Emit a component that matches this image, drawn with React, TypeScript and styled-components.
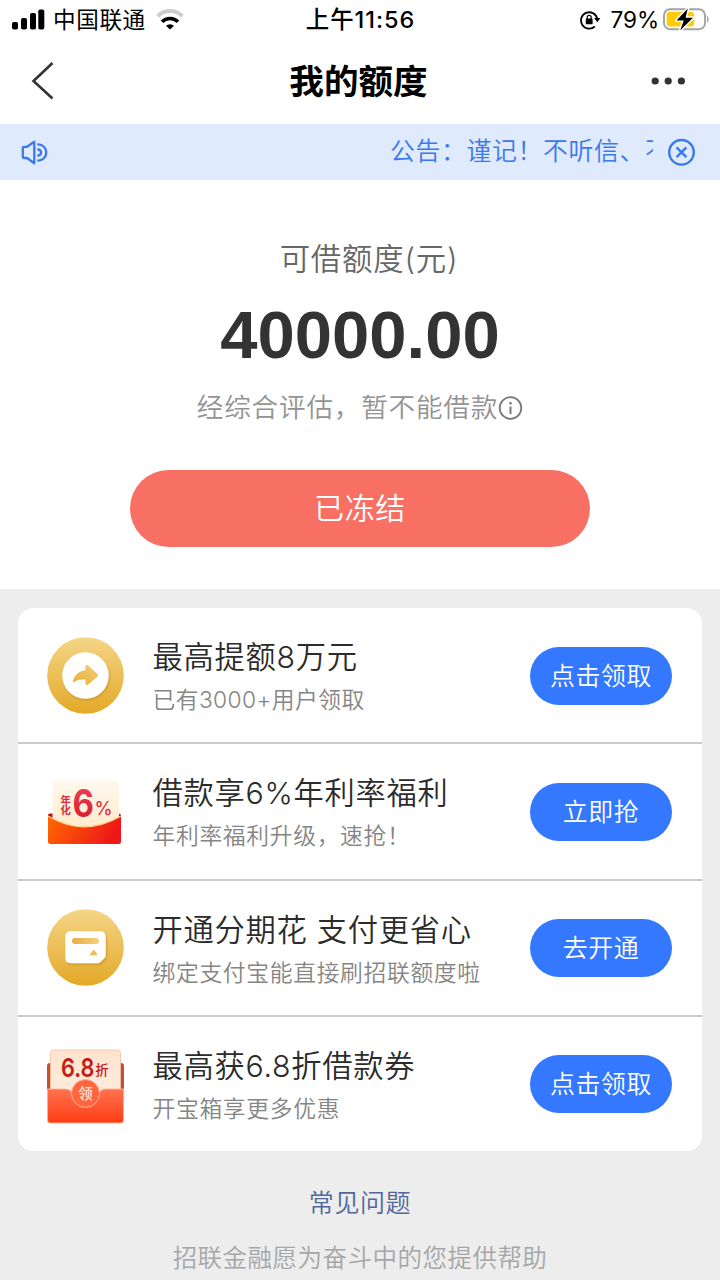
import React from "react";
import styled, { createGlobalStyle } from "styled-components";

const GlobalStyle = createGlobalStyle`
  * { box-sizing: border-box; }
  body {
    margin: 0;
    background: #ededed;
    font-family: Inter, "Noto Sans CJK SC", sans-serif;
    font-weight: 350;
    color: #333;
  }
`;

const Screen = styled.div`
  width: 720px;
  height: 1280px;
  overflow: hidden;
  background: #ededed;
  display: flex;
  flex-direction: column;
`;

const StatusBar = styled.div`
  height: 40px;
  flex: none;
  padding: 0 11px 0 12px;
  background: #fff;
  color: #000;
  display: grid;
  grid-template-columns: 1fr auto 1fr;
  align-items: center;
  font-size: 22.6px;
  font-weight: 400;
  line-height: 40px;
`;

const StatusSide = styled.div<{ $end?: boolean }>`
  display: flex;
  align-items: center;
  justify-content: ${(p) => (p.$end ? "flex-end" : "flex-start")};
`;

const Carrier = styled.span`
  margin: 0 10px 0 8px;
  letter-spacing: 0.6px;
`;

const Clock = styled.span`
  font-weight: 500;
  font-size: 23.4px;
  letter-spacing: 1px;
`;

const Percent = styled.span`
  margin: 0 4px 0 10px;
  letter-spacing: -0.1px;
`;

const NavBar = styled.header`
  height: 84px;
  flex: none;
  background: #fff;
  padding: 0 34px 3px 31px;
  display: grid;
  grid-template-columns: 1fr auto 1fr;
  align-items: center;
`;

const NavTitle = styled.h1`
  margin: 0;
  color: #000;
  font-size: 34.6px;
  line-height: 80px;
  font-weight: 700;
`;

const MoreSlot = styled.div`
  display: flex;
  justify-content: flex-end;
`;

const Notice = styled.div`
  height: 56px;
  flex: none;
  padding: 0 24px 0 21px;
  background: #dfeafd;
  color: #3b78ee;
  display: flex;
  align-items: center;
`;

const NoticeWindow = styled.div`
  flex: 1;
  margin: 0 15px 0 342px;
  overflow: hidden;
  white-space: nowrap;
  font-size: 24.9px;
  letter-spacing: 0.6px;
  line-height: 54px;
  height: 56px;
`;

const Hero = styled.section`
  height: 409px;
  flex: none;
  background: #fff;
  display: flex;
  flex-direction: column;
  align-items: center;
`;

const QuotaLabel = styled.div`
  margin-top: 57px;
  padding-left: 18px;
  font-size: 30.4px;
  letter-spacing: 0.8px;
  line-height: 44px;
  color: #666;
`;

const QuotaAmount = styled.div`
  margin-top: 16px;
  font: 700 67px/76px "Liberation Sans", sans-serif;
  color: #333;
`;

const QuotaHint = styled.div`
  margin-top: 14px;
  display: flex;
  align-items: center;
  font-size: 26.6px;
  letter-spacing: 0.8px;
  line-height: 40px;
  color: #939393;
`;

const FrozenButton = styled.button`
  margin-top: 43px;
  width: 460px;
  height: 77px;
  border: 0;
  border-radius: 39px;
  background: #f86f64;
  color: #fff;
  font-family: inherit;
  font-weight: inherit;
  font-size: 30px;
  letter-spacing: 0.6px;
  line-height: 77px;
  padding: 0;
`;

const Card = styled.ul`
  list-style: none;
  margin: 19px 18px 0;
  padding: 0;
  border-radius: 15px;
  background: #fff;
  flex: none;
`;

const Row = styled.li`
  height: 136.3px;
  padding: 0 30px 0 29px;
  display: flex;
  align-items: center;
  border-bottom: 2px solid #cbcbcb;
  &:last-child {
    height: 134.1px;
    border-bottom: 0;
  }
`;

const RowIcon = styled.div<{ $drop: number }>`
  display: flex;
  padding-top: ${(p) => p.$drop}px;
`;

const RowText = styled.div`
  flex: 1;
  margin-left: 28.5px;
  padding-top: 2px;
  white-space: nowrap;
`;

const RowTitle = styled.div`
  font-size: 30.3px;
  letter-spacing: 0.7px;
  line-height: 44px;
  color: #2b2b2b;
`;

const RowSub = styled.div<{ $tracking?: number }>`
  margin-top: 4px;
  font-size: 22.8px;
  letter-spacing: ${(p) => p.$tracking ?? 0.65}px;
  line-height: 34px;
  color: #858585;
`;

const RowButton = styled.button`
  margin-top: 1px;
  width: 142px;
  height: 58px;
  border: 0;
  padding: 1px 0 0;
  border-radius: 29px;
  background: #3478ff;
  color: #fff;
  font-family: inherit;
  font-weight: inherit;
  font-size: 24.9px;
  letter-spacing: 0.6px;
  line-height: 57px;
`;

const Footer = styled.footer`
  display: flex;
  flex-direction: column;
  align-items: center;
`;

const FaqLink = styled.a`
  margin-top: 33px;
  font-size: 25px;
  letter-spacing: 0.6px;
  line-height: 38px;
  color: #51669a;
`;

const Slogan = styled.p`
  margin: 17px 0 0;
  font-size: 24.5px;
  letter-spacing: 0.48px;
  line-height: 38px;
  color: #a6a6a6;
`;

const SignalIcon = () => (
  <svg width="33" height="22" viewBox="0 0 33 22">
    <rect x="0" y="13" width="6" height="7.5" rx="1.8" />
    <rect x="9" y="9" width="6" height="11.5" rx="1.8" />
    <rect x="18" y="4" width="6" height="16.5" rx="1.8" />
    <rect x="26.3" y="0.5" width="6" height="20" rx="1.8" />
  </svg>
);

const WifiIcon = () => (
  <svg width="28" height="22" viewBox="0 0 28 22" fill="none">
    <path d="M1.6 7.2a17.6 17.6 0 0 1 24.8 0" stroke="#cdcdcd" strokeWidth="4" />
    <path d="M6 12.800a11.300 11.300 0 0 1 16 0" stroke="#000" strokeWidth="3.600" />
    <path d="M10 16.700a6 6 0 0 1 8 0L14 20.600z" fill="#000" />
  </svg>
);

const RotationLockIcon = () => (
  <svg width="21" height="20" viewBox="0 0 21 20" fill="none">
    <path d="M14.8 16.5A8.2 8.2 0 1 1 17.2 8.6" stroke="#000" strokeWidth="1.8" />
    <path d="M14.2 8h6.2l-3.1 4.2z" fill="#000" />
    <rect x="5.8" y="8.6" width="6.8" height="5.7" rx="0.9" fill="#000" />
    <path d="M7.2 9V7.4a2 2 0 0 1 4 0V9" stroke="#000" strokeWidth="1.2" />
  </svg>
);

const BatteryIcon = () => (
  <svg width="46" height="24" viewBox="0 0 46 24">
    <rect x="1" y="1.200" width="41" height="20" rx="6" fill="none" stroke="#a3a3a3" strokeWidth="1.9" />
    <path d="M44 7.700c2 .8 2 6.200 0 7z" fill="#a3a3a3" />
    <rect x="3.600" y="3.800" width="27.600" height="14.800" rx="3.500" fill="#fdcb0a" />
    <path
      d="M24.800 .6 13.500 12.600h7.200L17.200 22.500l12.800-12.800h-7.400z"
      fill="#000"
      stroke="#fff"
      strokeWidth="3"
      strokeLinejoin="round"
      paintOrder="stroke"
    />
  </svg>
);

const BackIcon = () => (
  <svg width="24" height="38" viewBox="0 0 24 38" fill="none">
    <path d="M21.500 1 2.500 19 21.500 36.500" stroke="#333" strokeWidth="2.600" />
  </svg>
);

const MoreIcon = () => (
  <svg width="35" height="8" viewBox="0 0 35 8" fill="#333">
    <circle cx="4.200" cy="4" r="3.600" />
    <circle cx="17.200" cy="4" r="3.600" />
    <circle cx="30.400" cy="4" r="3.600" />
  </svg>
);

const SpeakerIcon = () => (
  <svg width="27" height="25" viewBox="0 0 27 25" fill="none" stroke="#3b78ee" strokeWidth="2.300">
    <path d="M2.800 6.800H6L13.300 1.700V23.300L6 18H2.800A1 1 0 0 1 1.800 17V7.800A1 1 0 0 1 2.800 6.800Z" strokeLinejoin="round" />
    <path d="M16.300 9.500h.8a3 3 0 0 1 0 6h-.8" />
    <path d="M16.300 4.300h.8a8.200 8.200 0 0 1 0 16.400h-.8" />
  </svg>
);

const CloseIcon = () => (
  <svg width="28" height="28" viewBox="0 0 28 28" fill="none" stroke="#3b78ee" strokeWidth="2.400">
    <circle cx="13.500" cy="14.300" r="12.300" />
    <path d="M8.600 9.400l9.800 9.800M18.400 9.400 8.600 19.200" />
  </svg>
);

const InfoIcon = () => (
  <svg width="25" height="25" viewBox="0 0 25 25" fill="none" stroke="#777" strokeWidth="1.800">
    <circle cx="12.500" cy="13" r="10.800" />
    <path d="M12.500 11.500v7.500" strokeWidth="2" />
    <circle cx="12.500" cy="8.300" r="1.300" fill="#777" stroke="none" />
  </svg>
);

const GoldGradient = ({ id }: { id: string }) => (
  <linearGradient id={id} x1="0" y1="0" x2="0" y2="1">
    <stop offset="0" stopColor="#f5d588" />
    <stop offset="1" stopColor="#e3a927" />
  </linearGradient>
);

const RaiseIcon = () => (
  <svg width="77" height="77" viewBox="0 0 77 77">
    <defs>
      <GoldGradient id="raiseGold" />
      <filter id="raiseShadow" x="-20%" y="-20%" width="140%" height="140%">
        <feDropShadow dx="1" dy="1.500" stdDeviation="1.200" floodColor="#c08a10" floodOpacity="0.600" />
      </filter>
      <linearGradient id="raiseArrow" x1="0" y1="1" x2="1" y2="0">
        <stop offset="0" stopColor="#e6b03a" />
        <stop offset="1" stopColor="#f4cc78" />
      </linearGradient>
    </defs>
    <circle cx="38.500" cy="38.500" r="38.300" fill="url(#raiseGold)" />
    <circle cx="38.500" cy="38.500" r="23.200" fill="#fff" filter="url(#raiseShadow)" />
    <path
      d="M38.500 33.300V29.500c0-1.500 1.500-2 2.600-1L50.700 37.300c.7.700.7 1.500 0 2.200L41.100 47.500c-1.100 1-2.600.5-2.600-1V42.600c-5-.5-8.500.3-11 2.300-1 .8-1.800.3-1.500-.8 1.800-6.200 6-10.200 12.500-10.800z"
      fill="url(#raiseArrow)"
    />
  </svg>
);

const RateIcon = () => (
  <svg width="77" height="66" viewBox="0 0 77 66">
    <defs>
      <linearGradient id="ratePocket" x1="0" y1="0" x2="1" y2="0.200">
        <stop offset="0" stopColor="#ff6800" />
        <stop offset="1" stopColor="#ee1818" />
      </linearGradient>
      <linearGradient id="ratePaper" x1="0" y1="0" x2="0" y2="1">
        <stop offset="0" stopColor="#fff8ee" />
        <stop offset="1" stopColor="#ffe9c8" />
      </linearGradient>
      <linearGradient id="rateSix" x1="0" y1="0" x2="0" y2="1">
        <stop offset="0" stopColor="#f0455c" />
        <stop offset="1" stopColor="#d81424" />
      </linearGradient>
    </defs>
    <path d="M1 36q0-1.500 2-1.500h68q3 0 3 2V50H1z" fill="#b91512" />
    <rect x="5.500" y="1.500" width="66.500" height="55" rx="2.500" fill="url(#ratePaper)" />
    <path d="M1 37Q37 58.500 74 37V62.500Q74 65 71.500 65H3.500Q1 65 1 62.500Z" fill="url(#ratePocket)" />
    <path d="M1 37Q37 58.500 74 37" fill="none" stroke="#ffd28c" strokeWidth="1.300" />
    <g fontWeight="700" fill="#dc2a3a">
      <text x="13.500" y="24.500" fontSize="10.300">年</text>
      <text x="13.500" y="35" fontSize="10.300">化</text>
    </g>
    <text x="25.500" y="38" fontFamily="Inter, sans-serif" fontSize="38" fontWeight="700" fill="url(#rateSix)" textLength="21.500" lengthAdjust="spacingAndGlyphs">6</text>
    <text x="47.500" y="35.500" fontFamily="Inter, sans-serif" fontSize="18" fontWeight="500" fill="#dc3443" textLength="18" lengthAdjust="spacingAndGlyphs">%</text>
  </svg>
);

const CardIcon = () => (
  <svg width="77" height="77" viewBox="0 0 77 77">
    <defs>
      <GoldGradient id="cardGold" />
      <filter id="cardShadow" x="-20%" y="-20%" width="140%" height="140%">
        <feDropShadow dx="1" dy="1.500" stdDeviation="1.200" floodColor="#b98208" floodOpacity="0.600" />
      </filter>
      <linearGradient id="cardStripe" x1="0" y1="0" x2="1" y2="0">
        <stop offset="0" stopColor="#e5b041" />
        <stop offset="1" stopColor="#f3ce80" />
      </linearGradient>
    </defs>
    <circle cx="38.500" cy="38.500" r="38.300" fill="url(#cardGold)" />
    <path
      d="M23.500 22.300H53Q58.700 22.300 58.700 28V45.500Q58.700 48 57 49.700L53.500 53Q52.200 54.200 50.500 54.200H23.500Q18.300 54.200 18.300 49V28Q18.300 22.300 23.500 22.300Z"
      fill="#fff"
      filter="url(#cardShadow)"
    />
    <rect x="25" y="29" width="27" height="6" rx="3" fill="url(#cardStripe)" />
    <path d="M46 41.300q.7-.8 1.400 0l2.900 3.700q.6 1.200-.8 1.200h-5.600q-1.400 0-.8-1.200z" fill="#edbf5e" />
  </svg>
);

const CouponIcon = () => (
  <svg width="77" height="75" viewBox="0 0 77 75">
    <defs>
      <linearGradient id="couponPocket" x1="0" y1="0" x2="0" y2="1">
        <stop offset="0" stopColor="#ff7350" />
        <stop offset="1" stopColor="#fe3c12" />
      </linearGradient>
      <linearGradient id="couponPaper" x1="0" y1="0" x2="0" y2="1">
        <stop offset="0" stopColor="#ffe3cf" />
        <stop offset="1" stopColor="#ffeee1" />
      </linearGradient>
    </defs>
    <rect x="0" y="14" width="77" height="40" rx="3" fill="#c4512e" />
    <rect x="3.500" y="1" width="70" height="55" rx="3" fill="url(#couponPaper)" stroke="#f5c1a5" strokeWidth="0.800" />
    <path
      d="M0.500 40H19Q23 40 25 44A14.500 14.500 0 0 0 52 44Q54 40 58 40H76.500V71Q76.500 74 74 74H3Q0.500 74 0.500 71Z"
      fill="url(#couponPocket)"
      stroke="#ffb398"
      strokeWidth="0.900"
    />
    <circle cx="38.500" cy="44.500" r="14" fill="#ff6640" stroke="#ffb398" strokeWidth="1" />
    <text x="38.500" y="50" fontSize="14.500" fontWeight="500" textAnchor="middle" fill="#ffe7d8">领</text>
    <text x="14" y="27.800" fontFamily="Inter, sans-serif" fontSize="26" fontWeight="600" fill="#c31d17" textLength="33.500" lengthAdjust="spacingAndGlyphs">6.8</text>
    <text x="48.300" y="26.300" fontSize="13.500" fontWeight="500" fill="#c31d17">折</text>
  </svg>
);

const offers = [
  { icon: <RaiseIcon />, drop: 0, title: "最高提额8万元", sub: "已有3000+用户领取", tracking: 0.4, action: "点击领取" },
  { icon: <RateIcon />, drop: 2, title: "借款享6%年利率福利", sub: "年利率福利升级，速抢！", action: "立即抢" },
  { icon: <CardIcon />, drop: 0, title: "开通分期花 支付更省心", sub: "绑定支付宝能直接刷招联额度啦", action: "去开通" },
  { icon: <CouponIcon />, drop: 5, title: "最高获6.8折借款券", sub: "开宝箱享更多优惠", action: "点击领取" },
];

export default function App() {
  return (
    <Screen>
      <GlobalStyle />
      <StatusBar>
        <StatusSide>
          <SignalIcon />
          <Carrier>中国联通</Carrier>
          <WifiIcon />
        </StatusSide>
        <Clock>上午11:56</Clock>
        <StatusSide $end>
          <RotationLockIcon />
          <Percent>79%</Percent>
          <BatteryIcon />
        </StatusSide>
      </StatusBar>
      <NavBar>
        <BackIcon />
        <NavTitle>我的额度</NavTitle>
        <MoreSlot>
          <MoreIcon />
        </MoreSlot>
      </NavBar>
      <Notice>
        <SpeakerIcon />
        <NoticeWindow>公告：谨记！不听信、不</NoticeWindow>
        <CloseIcon />
      </Notice>
      <Hero>
        <QuotaLabel>可借额度(元)</QuotaLabel>
        <QuotaAmount>40000.00</QuotaAmount>
        <QuotaHint>
          经综合评估，暂不能借款
          <InfoIcon />
        </QuotaHint>
        <FrozenButton>已冻结</FrozenButton>
      </Hero>
      <Card>
        {offers.map((offer) => (
          <Row key={offer.title}>
            <RowIcon $drop={offer.drop}>{offer.icon}</RowIcon>
            <RowText>
              <RowTitle>{offer.title}</RowTitle>
              <RowSub $tracking={offer.tracking}>{offer.sub}</RowSub>
            </RowText>
            <RowButton>{offer.action}</RowButton>
          </Row>
        ))}
      </Card>
      <Footer>
        <FaqLink>常见问题</FaqLink>
        <Slogan>招联金融愿为奋斗中的您提供帮助</Slogan>
      </Footer>
    </Screen>
  );
}
